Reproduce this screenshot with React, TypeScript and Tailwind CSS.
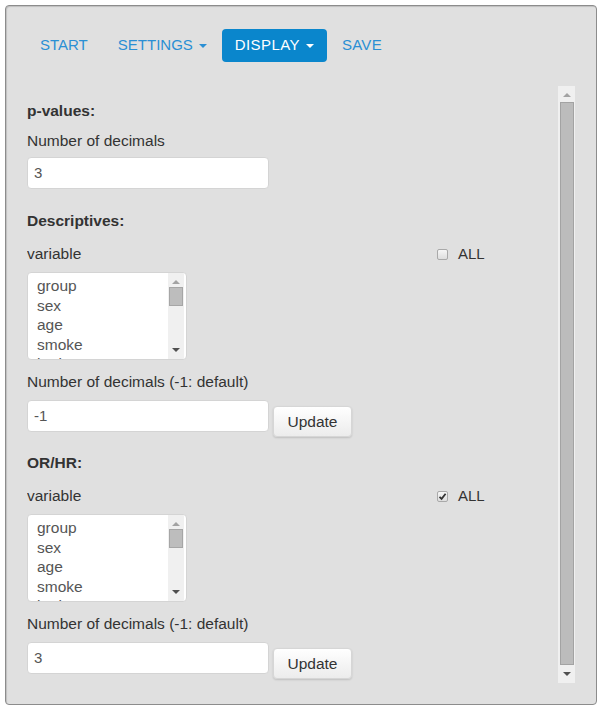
import type { ReactNode } from "react";

const font = { fontFamily: '"Liberation Sans", Arial, sans-serif' };

function Caret() {
  return (
    <span className="ml-[6px] inline-block h-0 w-0 border-x-[4px] border-t-[4px] border-x-transparent border-t-current align-middle" />
  );
}

function NavPill({
  children,
  active = false,
  className = ""
}: {
  children: ReactNode;
  active?: boolean;
  className?: string;
}) {
  return (
    <a
      className={`flex h-[33px] items-center rounded-[4px] px-[13px] text-[15px] ${
        active ? "bg-[#0a86cc] text-white" : "text-[#2a8fd4]"
      } ${className}`}
    >
      {children}
    </a>
  );
}

function TextInput({ value }: { value: string }) {
  return (
    <div className="flex h-[32px] w-[242px] items-center rounded-[4px] border border-[#d4d4d4] bg-white px-[6px] text-[15px] text-[#555]">
      {value}
    </div>
  );
}

function UpdateButton() {
  return (
    <button
      type="button"
      className="mt-[6px] h-[31px] w-[79px] rounded-[4px] border border-[#d6d6d6] bg-gradient-to-b from-white to-[#ececec] text-[15.5px] text-[#333] shadow-[0_1px_2px_rgba(0,0,0,0.15)]"
    >
      Update
    </button>
  );
}

function Checkbox({ checked }: { checked: boolean }) {
  return (
    <span className="relative inline-block h-[11px] w-[11px] rounded-[2px] border border-[#a9a9a9] bg-gradient-to-b from-[#f6f6f6] to-[#dedede]">
      {checked ? (
        <svg viewBox="0 0 11 11" className="absolute left-[-1px] top-[-1px] h-[11px] w-[11px]">
          <path d="M2.5 5.8 L4.6 7.8 L8.6 2.8" fill="none" stroke="#333" strokeWidth="1.8" />
        </svg>
      ) : null}
    </span>
  );
}

function ListBox() {
  const items = ["group", "sex", "age", "smoke", "bmi"];
  return (
    <div className="flex h-[88px] w-[160px] overflow-hidden rounded-[4px] border border-[#d4d4d4] bg-white">
      <div className="flex-1 overflow-hidden pl-[9px] pt-[3px] text-[15.5px] leading-[19.5px] text-[#555]">
        {items.map((item) => (
          <div key={item}>{item}</div>
        ))}
      </div>
      <div className="mr-[2px] flex w-[16px] flex-col items-center bg-[#f0f0f0]">
        <span className="mt-[7px] h-0 w-0 border-x-[4px] border-b-[4px] border-x-transparent border-b-[#a3a3a3]" />
        <span className="mt-[3px] h-[19px] w-[14px] border border-[#a6a6a6] bg-[#bdbdbd]" />
        <span className="mb-[7px] mt-auto h-0 w-0 border-x-[4px] border-t-[4px] border-x-transparent border-t-[#505050]" />
      </div>
    </div>
  );
}

function VariableRow({ checked }: { checked: boolean }) {
  return (
    <div className="mt-[13px] grid grid-cols-[410px_auto] items-center leading-[20px]">
      <span>variable</span>
      <span className="flex items-center gap-[10px]">
        <Checkbox checked={checked} />
        <span className="text-[15px]">ALL</span>
      </span>
    </div>
  );
}

function DecimalsGroup({ value, checked }: { value: string; checked: boolean }) {
  return (
    <>
      <VariableRow checked={checked} />
      <div className="mt-[8px]">
        <ListBox />
      </div>
      <div className="mt-[12px] leading-[20px]">Number of decimals (-1: default)</div>
      <div className="mt-[8px] flex gap-[4px]">
        <TextInput value={value} />
        <UpdateButton />
      </div>
    </>
  );
}

export default function App() {
  return (
    <div className="bg-white p-[5px]" style={font}>
      <div className="flex h-[700px] w-[592px] flex-col rounded-[4px] border border-[#8c8c8c] bg-[#e0e0e0] px-[21px] pb-[21px] pt-[23px] shadow-[inset_1px_1px_1px_rgba(0,0,0,0.15)]">
        <nav className="flex">
          <NavPill>START</NavPill>
          <NavPill className="ml-[4px]">
            SETTINGS
            <Caret />
          </NavPill>
          <NavPill active className="ml-[2px] tracking-[0.4px]">
            DISPLAY
            <Caret />
          </NavPill>
          <NavPill className="ml-[2px] tracking-[0.3px]">SAVE</NavPill>
        </nav>
        <div className="mt-[24px] flex min-h-0 flex-1">
          <div className="min-w-0 flex-1 overflow-hidden pt-[15px] text-[15.5px] text-[#333]">
            <div className="font-bold leading-[20px]">p-values:</div>
            <div className="mt-[10px] leading-[20px]">Number of decimals</div>
            <div className="mt-[6px]">
              <TextInput value="3" />
            </div>
            <div className="mt-[22px] font-bold leading-[20px]">Descriptives:</div>
            <DecimalsGroup value="-1" checked={false} />
            <div className="mt-[16px] font-bold leading-[20px]">OR/HR:</div>
            <DecimalsGroup value="3" checked />
          </div>
          <div className="flex w-[17px] flex-col items-center bg-[#f0f0f0]">
            <span className="mt-[7px] h-0 w-0 border-x-[4px] border-b-[4px] border-x-transparent border-b-[#a3a3a3]" />
            <span className="mt-[5px] w-[14px] flex-1 border border-[#a3a3a3] bg-[#bcbcbc]" />
            <span className="mb-[7px] mt-[7px] h-0 w-0 border-x-[4px] border-t-[4px] border-x-transparent border-t-[#505050]" />
          </div>
        </div>
      </div>
    </div>
  );
}
